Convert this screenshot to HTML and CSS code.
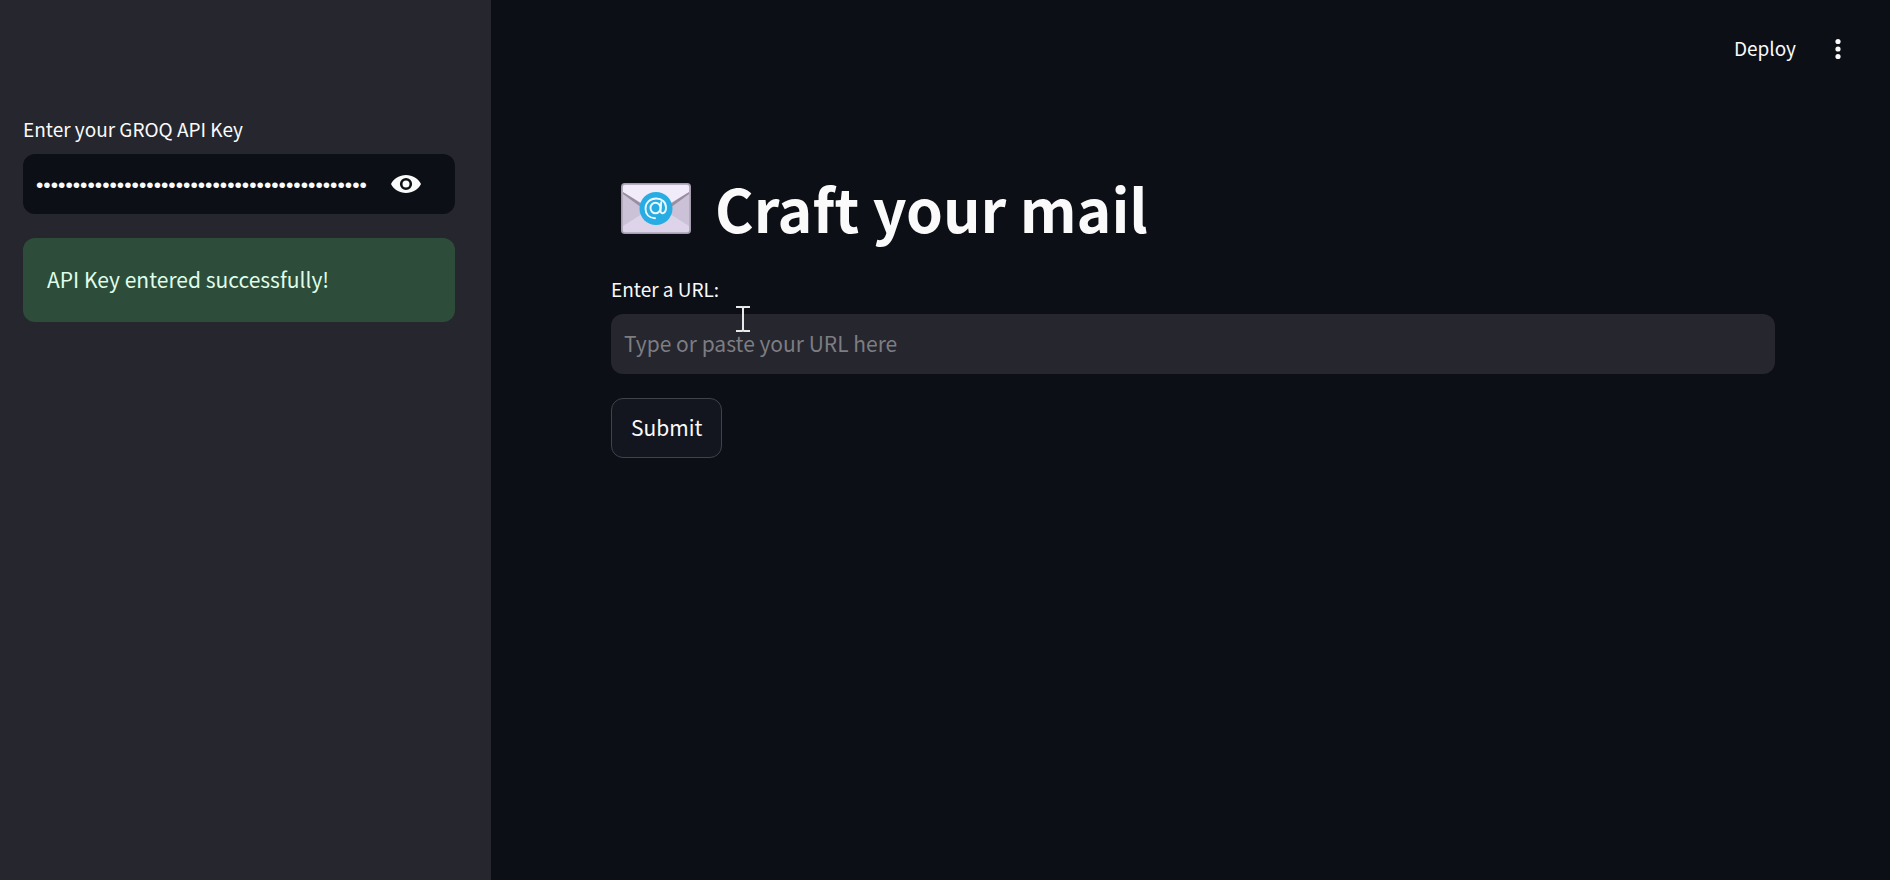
FILE: index.html
```html
<!DOCTYPE html>
<html lang="en">
<head>
<meta charset="utf-8">
<title>Craft your mail</title>
<link rel="stylesheet" href="styles.css">
</head>
<body>
<div class="app">
  <aside class="sidebar">
    <div class="field">
      <label class="label" for="api-key">Enter your GROQ API Key</label>
      <div class="input-box key-box">
        <input class="input key-input" id="api-key" type="password" value="gsk_0123456789012345678901234567890123456789012345678901">
        <button class="eye-button" type="button" aria-label="Show password">
          <svg class="eye-icon" viewBox="0 0 30 18" aria-hidden="true"><path fill="#fafafa" fill-rule="evenodd" d="M15 0C8.400 0 2.700 3.700 0 9c2.700 5.300 8.400 9 15 9s12.300-3.700 15-9C27.300 3.700 21.600 0 15 0zm0 15.100A6.100 6.100 0 1 1 15 2.900a6.100 6.100 0 0 1 0 12.200zm0-2.600a3.500 3.500 0 1 0 0-7 3.500 3.500 0 0 0 0 7z"/></svg>
        </button>
      </div>
    </div>
    <div class="alert" role="status">API Key entered successfully!</div>
  </aside>
  <div class="page">
    <header class="toolbar">
      <button class="deploy" type="button">Deploy</button>
      <button class="menu" type="button" aria-label="Main menu">
        <svg class="menu-icon" viewBox="0 0 6 22" aria-hidden="true"><g fill="#fafafa"><circle cx="3" cy="3.500" r="2.600"/><circle cx="3" cy="11" r="2.600"/><circle cx="3" cy="18.500" r="2.600"/></g></svg>
      </button>
    </header>
    <main class="content">
      <h1 class="title">
        <svg class="mail-icon" viewBox="0 0 70 51" aria-hidden="true">
          <rect x=".8" y=".8" width="68.400" height="49.400" rx="3" fill="#cbc2d8" stroke="#a59dae" stroke-width="1.600"/>
          <path fill="#ddd4ea" d="M2 43 24 29h22l22 14v4a2 2 0 0 1-2 2H4a2 2 0 0 1-2-2z"/>
          <path fill="#998fa3" d="M2 8l33 23L68 8v3L38 33h-6L2 11z"/>
          <path fill="#f2ebfa" d="M2 4a2 2 0 0 1 2-2h62a2 2 0 0 1 2 2v5L35 29 2 9z"/>
          <circle cx="35" cy="25.500" r="16.500" fill="#27ade3"/>
          <g fill="none" stroke="#eef9ff" stroke-width="1.900" stroke-linecap="round">
            <ellipse cx="34.500" cy="25" rx="5" ry="5.300"/>
            <path d="M40.200 19.300 39.500 27.500c-.1 4.200 5.500 3.600 5.500-3 0-5.500-4.100-9-9.900-9-6.200 0-10.600 4.300-10.600 10s3.600 9.500 9.500 9.800"/>
          </g>
        </svg>
        <span>Craft your mail</span>
      </h1>
      <form class="form">
        <div class="field">
          <label class="label" for="url">Enter a URL:</label>
          <div class="input-box url-box">
            <input class="input" id="url" type="text" placeholder="Type or paste your URL here">
            <svg class="cursor" viewBox="0 0 14 26" aria-hidden="true"><path fill="none" stroke="#e8e8e8" stroke-width="2" d="M0 1h6l1 1 1-1h6M7 2v22M0 25h6l1-1 1 1h6"/></svg>
          </div>
        </div>
        <button class="submit" type="button">Submit</button>
      </form>
    </main>
  </div>
</div>
</body>
</html>
```
FILE: styles.css
```css
* {
  box-sizing: border-box;
}

body {
  margin: 0;
  background: #0c0f16;
  color: #fafafa;
  font-family: "Noto Sans CJK SC", "Open Sans", sans-serif;
  font-size: 21px;
}

button,
input {
  font: inherit;
  color: inherit;
}

.app {
  display: flex;
  min-height: 100vh;
}

.sidebar {
  flex: 0 0 491px;
  display: flex;
  flex-direction: column;
  gap: 24px;
  padding: 111px 36px 24px 23px;
  background: #25262e;
}

.field {
  display: flex;
  flex-direction: column;
  gap: 7px;
}

.label {
  font-size: 19px;
  line-height: 36px;
}

.input-box {
  display: flex;
  align-items: center;
  height: 60px;
  border-radius: 12px;
}

.input {
  flex: 1;
  min-width: 0;
  height: 100%;
  padding: 0 13px 2px;
  border: 0;
  outline: 0;
  background: transparent;
}

.input::placeholder {
  color: #7d7d82;
  opacity: 1;
}

.key-box {
  background: #0c0f16;
  padding-right: 34px;
}

.key-input {
  padding: 2px 0 0;
  margin: 0 24px 0 13px;
  font-family: "Liberation Sans", sans-serif;
}

.eye-button,
.deploy,
.menu {
  display: flex;
  padding: 0;
  border: 0;
  background: none;
}

.eye-icon {
  width: 30px;
  height: 18px;
}

.alert {
  padding: 23px 24px 25px;
  border-radius: 12px;
  background: #2d4d3a;
  color: #dffde9;
  line-height: 36px;
}

.page {
  flex: 1;
  min-width: 0;
}

.toolbar {
  display: flex;
  justify-content: flex-end;
  align-items: center;
  gap: 39px;
  height: 98px;
  padding-right: 49px;
}

.deploy {
  padding-bottom: 2px;
  font-size: 19px;
  line-height: 32px;
}

.menu-icon {
  width: 6px;
  height: 22px;
}

.content {
  padding: 67px 115px 48px 120px;
}

.title {
  display: flex;
  align-items: center;
  gap: 24px;
  margin: 0 0 20px;
  padding-left: 10px;
  font-size: 59px;
  line-height: 86px;
  font-weight: 700;
}

.mail-icon {
  width: 70px;
  height: 51px;
}

.form {
  display: flex;
  flex-direction: column;
  align-items: stretch;
  gap: 24px;
}

.url-box {
  position: relative;
  background: #25262e;
}

.cursor {
  position: absolute;
  left: 125px;
  top: -8px;
  width: 14px;
  height: 26px;
}

.submit {
  align-self: flex-start;
  height: 60px;
  padding: 0 19px 2px;
  border: 1px solid #41434a;
  border-radius: 12px;
  background: #13161e;
}
```
